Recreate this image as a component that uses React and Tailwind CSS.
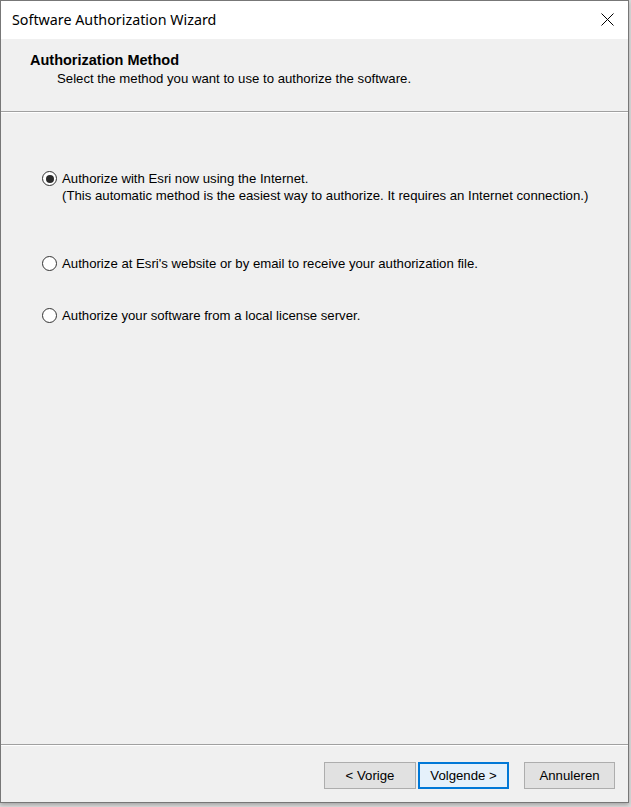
import { useState } from 'react';

const options = [
  {
    id: 'internet',
    label: 'Authorize with Esri now using the Internet.',
    note: '(This automatic method is the easiest way to authorize. It requires an Internet connection.)',
  },
  {
    id: 'website',
    label: "Authorize at Esri's website or by email to receive your authorization file.",
  },
  {
    id: 'server',
    label: 'Authorize your software from a local license server.',
  },
];

const Radio = ({ checked }) => (
  <span className="mt-[1px] flex h-[15px] w-[15px] shrink-0 items-center justify-center rounded-full border border-[#333] bg-white">
    {checked && <span className="h-[8px] w-[8px] rounded-full bg-[#2a2a2a]" />}
  </span>
);

const App = () => {
  const [method, setMethod] = useState('internet');

  return (
    <div
      className="h-[807px] w-[631px] bg-[#dcdcdc]"
      style={{ fontFamily: '"Liberation Sans", Arial, sans-serif' }}
    >
      <div className="flex h-[803px] w-[629px] flex-col border border-[#777] bg-[#f0f0f0] text-[13.2px] text-black shadow-[0_2px_4px_rgba(0,0,0,0.25)]">
        {/* Title bar */}
        <div className="flex h-[38px] shrink-0 items-center justify-between bg-white pl-[11px] pr-[14px]">
          <span className="text-[14.3px] text-black" style={{ fontFamily: '"Noto Sans", "Open Sans", sans-serif' }}>
            Software Authorization Wizard
          </span>
          <svg width="13" height="13" viewBox="0 0 13 13" className="mb-[2px]">
            <path d="M0.5 0.5 L12.5 12.5 M12.5 0.5 L0.5 12.5" stroke="#000" strokeWidth="1" />
          </svg>
        </div>

        {/* Header */}
        <div className="h-[73px] shrink-0 border-b border-[#a0a0a0] pl-[29px] pt-[12px]">
          <div className="text-[14.5px] font-bold leading-[18px]">Authorization Method</div>
          <div className="mt-[1px] pl-[27px] leading-[17px]">
            Select the method you want to use to authorize the software.
          </div>
        </div>
        <div className="h-px shrink-0 bg-white" />

        {/* Options */}
        <div className="flex flex-1 flex-col pl-[41px] pt-[57px]">
          {options.map((opt, i) => (
            <label
              key={opt.id}
              onClick={() => setMethod(opt.id)}
              className={`flex cursor-default items-start gap-[5px] leading-[17px] ${
                i === 1 ? 'mt-[51px]' : i === 2 ? 'mt-[35px]' : ''
              }`}
            >
              <Radio checked={method === opt.id} />
              <span>
                <span className="block">{opt.label}</span>
                {opt.note && <span className="block">{opt.note}</span>}
              </span>
            </label>
          ))}
        </div>

        {/* Footer */}
        <div className="h-[58px] shrink-0 border-t border-[#a0a0a0]">
          <div className="h-px bg-white" />
          <div className="flex justify-end pr-[13px] pt-[16px]">
            <button className="h-[27px] w-[92px] border border-[#adadad] bg-[#e1e1e1] text-[13.2px]">
              &lt; Vorige
            </button>
            <button className="ml-[2px] h-[27px] w-[91px] border-2 border-[#0078d7] bg-[#e5f1fb] text-[13.2px]">
              Volgende &gt;
            </button>
            <button className="ml-[15px] h-[27px] w-[91px] border border-[#adadad] bg-[#e1e1e1] text-[13.2px]">
              Annuleren
            </button>
          </div>
        </div>
      </div>
    </div>
  );
};

export default App;
